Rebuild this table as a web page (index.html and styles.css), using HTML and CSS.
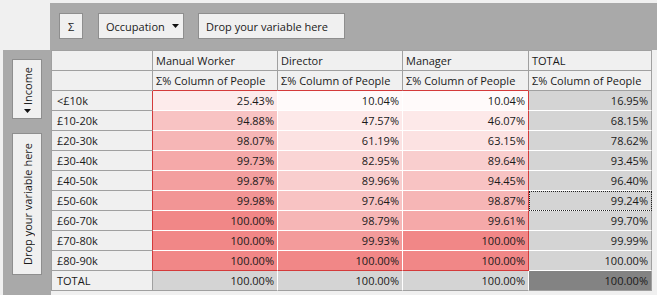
FILE: index.html
```html
<!DOCTYPE html>
<html>
<head>
<meta charset="utf-8">
<link rel="stylesheet" href="styles.css">
</head>
<body>
<div class="app">
  <div class="corner"></div>
  <div class="topbar">
    <div class="btn sigma">Σ</div>
    <div class="btn drop">Occupation <svg class="arrow" width="7" height="4" viewBox="0 0 7 4"><path d="M0 0H7L3.5 4Z" fill="#111"/></svg></div>
    <div class="btn wide">Drop your variable here</div>
  </div>
  <div class="leftbar">
    <div class="vbtn income"><span class="vtext">Income</span><svg class="arrow" width="7" height="4" viewBox="0 0 7 4"><path d="M0 0H7L3.5 4Z" fill="#111"/></svg></div>
    <div class="vbtn dropv"><span class="vtext">Drop your variable here</span></div>
  </div>
  <div class="pivot">
    <div class="c hd"></div>
    <div class="c hd">Manual Worker</div>
    <div class="c hd">Director</div>
    <div class="c hd">Manager</div>
    <div class="c hd">TOTAL</div>

    <div class="c hd"></div>
    <div class="c hd redb">Σ% Column of People</div>
    <div class="c hd redb">Σ% Column of People</div>
    <div class="c hd redb">Σ% Column of People</div>
    <div class="c hd">Σ% Column of People</div>

    <div class="c rh">&lt;£10k</div>
    <div class="c v" style="background:rgb(253,235,235)">25.43%</div>
    <div class="c v" style="background:rgb(255,250,250)">10.04%</div>
    <div class="c v mg" style="background:rgb(255,250,250)">10.04%</div>
    <div class="c tc">16.95%</div>

    <div class="c rh">£10-20k</div>
    <div class="c v" style="background:rgb(248,195,195)">94.88%</div>
    <div class="c v" style="background:rgb(253,233,233)">47.57%</div>
    <div class="c v mg" style="background:rgb(253,233,233)">46.07%</div>
    <div class="c tc">68.15%</div>

    <div class="c rh">£20-30k</div>
    <div class="c v" style="background:rgb(246,182,182)">98.07%</div>
    <div class="c v" style="background:rgb(252,226,226)">61.19%</div>
    <div class="c v mg" style="background:rgb(252,226,226)">63.15%</div>
    <div class="c tc">78.62%</div>

    <div class="c rh">£30-40k</div>
    <div class="c v" style="background:rgb(245,169,169)">99.73%</div>
    <div class="c v" style="background:rgb(250,213,213)">82.95%</div>
    <div class="c v mg" style="background:rgb(249,206,206)">89.64%</div>
    <div class="c tc">93.45%</div>

    <div class="c rh">£40-50k</div>
    <div class="c v" style="background:rgb(243,159,159)">99.87%</div>
    <div class="c v" style="background:rgb(249,206,206)">89.96%</div>
    <div class="c v mg" style="background:rgb(248,195,195)">94.45%</div>
    <div class="c tc">96.40%</div>

    <div class="c rh">£50-60k</div>
    <div class="c v" style="background:rgb(242,149,149)">99.98%</div>
    <div class="c v" style="background:rgb(248,195,195)">97.64%</div>
    <div class="c v mg" style="background:rgb(246,182,182)">98.87%</div>
    <div class="c tc focus">99.24%</div>

    <div class="c rh">£60-70k</div>
    <div class="c v" style="background:rgb(241,135,135)">100.00%</div>
    <div class="c v" style="background:rgb(246,182,182)">98.79%</div>
    <div class="c v mg" style="background:rgb(245,169,169)">99.61%</div>
    <div class="c tc">99.70%</div>

    <div class="c rh">£70-80k</div>
    <div class="c v" style="background:rgb(241,135,135)">100.00%</div>
    <div class="c v" style="background:rgb(243,155,155)">99.93%</div>
    <div class="c v mg" style="background:rgb(241,135,135)">100.00%</div>
    <div class="c tc">99.99%</div>

    <div class="c rh">£80-90k</div>
    <div class="c v redb" style="background:rgb(241,135,135)">100.00%</div>
    <div class="c v redb" style="background:rgb(241,135,135)">100.00%</div>
    <div class="c v mg redb" style="background:rgb(241,135,135)">100.00%</div>
    <div class="c tc">100.00%</div>

    <div class="c rh last">TOTAL</div>
    <div class="c tr">100.00%</div>
    <div class="c tr">100.00%</div>
    <div class="c tr">100.00%</div>
    <div class="c grand">100.00%</div>
  </div>
</div>
</body>
</html>
```
FILE: styles.css
```css
html, body {
  margin: 0;
  padding: 0;
  background: #f0f0f0;
}
body {
  font-family: "Open Sans", "Noto Sans", sans-serif;
  font-size: 11px;
  color: #1a1a1a;
  width: 657px;
  height: 295px;
  overflow: hidden;
}
.app {
  display: grid;
  grid-template-columns: 48px 606px;
  grid-template-rows: 47px 245px;
  padding: 3px 0 0 3px;
}
.topbar {
  background: #a9a9a9;
  display: flex;
  align-items: flex-start;
  gap: 15px;
  padding: 10px 0 0 9px;
  margin-left: -1px;
}
.btn {
  box-sizing: border-box;
  height: 26px;
  background: #f0f0f0;
  border: 1px solid #8e8e8e;
  display: flex;
  align-items: center;
  padding: 0 7px;
  line-height: 1;
}
.sigma { width: 24px; justify-content: center; padding: 0; }
.drop { width: 86px; justify-content: space-between; padding: 0 4px 0 7px; }
.wide { width: 147px; margin-left: -1px; }
.leftbar {
  background: #a9a9a9;
  display: flex;
  flex-direction: column;
  align-items: flex-start;
  gap: 14px;
  padding: 9px 0 0 9px;
}
.vbtn {
  box-sizing: border-box;
  width: 30px;
  background: #f0f0f0;
  border: 1px solid #8e8e8e;
  display: flex;
  flex-direction: column;
  align-items: center;
  justify-content: center;
  gap: 4px;
}
.income { height: 60px; padding-top: 2px; }
.dropv { height: 142px; }
.vtext {
  writing-mode: vertical-rl;
  transform: rotate(180deg);
  line-height: 1;
}
.pivot {
  display: grid;
  grid-template-columns: 101px 125px 125px 126px 123px;
  grid-auto-rows: 20px;
  border-left: 1px solid #a0a0a0;
  border-top: 1px solid #a0a0a0;
  align-self: start;
  justify-self: start;
}
.c {
  box-sizing: border-box;
  border-right: 1px solid #a0a0a0;
  border-bottom: 1px solid #a0a0a0;
  padding: 0 3px;
  line-height: 19px;
  white-space: nowrap;
  overflow: hidden;
}
.hd { background: #f0f0f0; }
.rh {
  background: #f0f0f0;
  padding-left: 5px;
  border-right-color: #d43a3a;
}
.rh.last { border-right-color: #a0a0a0; }
.redb { border-bottom-color: #d43a3a; }
.v {
  text-align: right;
  border-right-color: #fff;
  border-bottom-color: #fff;
  padding-right: 3px;
}
.v.redb { border-bottom-color: #d43a3a; }
.v.mg { border-right-color: #d43a3a; }
.tc {
  background: #d4d4d4;
  text-align: right;
  border-bottom-color: #fff;
  padding-right: 3px;
}
.focus {
  outline: 1px dotted #222;
  outline-offset: -1px;
}
.tr {
  background: #d4d4d4;
  text-align: right;
  border-right-color: #fff;
  padding-right: 3px;
}
.grand {
  background: #838383;
  text-align: right;
  padding-right: 3px;
}
```
